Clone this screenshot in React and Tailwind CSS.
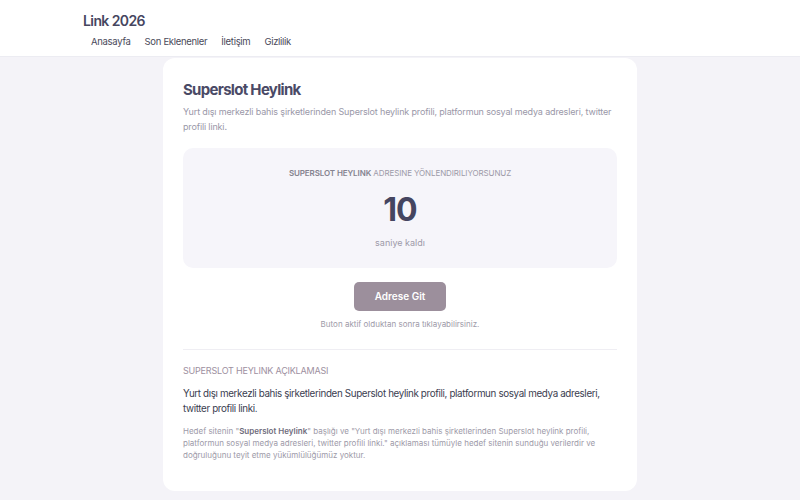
export default function App() {
  const font = { fontFamily: 'Inter, "Noto Sans", sans-serif' };
  return (
    <div className="min-h-[500px] bg-[#f4f3f8] text-[#4a4a66]" style={font}>
      <header className="bg-white border-b border-[#ececf2] h-[57px] px-[83px] pt-[12px]">
        <div className="text-[14px] font-semibold leading-[18px] text-[#46465f] tracking-[-0.6px]">Link 2026</div>
        <nav className="flex gap-[14px] pl-[8px] mt-[5px] text-[9.5px] text-[#4a4a5a] leading-[14px] tracking-[-0.3px]">
          <span>Anasayfa</span>
          <span>Son Eklenenler</span>
          <span>İletişim</span>
          <span>Gizlilik</span>
        </nav>
      </header>
      <main className="flex justify-center pt-[1px] pb-[12px]">
        <div className="w-[474px] bg-white rounded-[12px] px-[20px] pt-[22px] pb-[30px]">
          <h1 className="text-[15px] font-bold leading-[20px] text-[#4a4a66] tracking-[-0.7px]">Superslot Heylink</h1>
          <p className="mt-[4px] text-[9px] leading-[15px] text-[#9a98a8] tracking-[-0.15px]">
            Yurt dışı merkezli bahis şirketlerinden Superslot heylink profili, platformun sosyal medya adresleri, twitter profili linki.
          </p>
          <div className="mt-[14px] bg-[#f6f5fa] rounded-[10px] h-[120px] flex flex-col items-center pt-[20px]">
            <div className="text-[8px] leading-[10px] text-[#9d9aa8] uppercase tracking-[-0.1px]">
              <span className="font-semibold text-[#85838f]">SUPERSLOT HEYLINK</span> ADRESINE YÖNLENDIRILIYORSUNUZ
            </div>
            <div className="mt-[14px] text-[32px] font-bold leading-[36px] text-[#454560] tracking-[-1px]">10</div>
            <div className="mt-[9px] text-[9px] leading-[12px] text-[#9d9aa8]">saniye kaldı</div>
          </div>
          <div className="flex flex-col items-center mt-[14px]">
            <button className="w-[92px] h-[29px] rounded-[5px] bg-[#9c8f9c] text-white text-[10px] font-semibold">Adrese Git</button>
            <div className="mt-[8px] text-[8px] leading-[10px] text-[#9d9aa8]">Buton aktif olduktan sonra tıklayabilirsiniz.</div>
          </div>
          <div className="mt-[20px] border-t border-[#efeef3]"></div>
          <div className="mt-[15px] text-[9px] leading-[12px] text-[#9d90a0] tracking-[-0.2px]">SUPERSLOT HEYLINK AÇIKLAMASI</div>
          <p className="mt-[9px] text-[9.8px] leading-[15px] text-[#3a3d4f] tracking-[-0.35px]">
            Yurt dışı merkezli bahis şirketlerinden Superslot heylink profili, platformun sosyal medya adresleri, twitter profili linki.
          </p>
          <p className="mt-[9px] text-[8px] leading-[12px] text-[#9d9aa8]">
            Hedef sitenin "<span className="font-semibold text-[#6f6d7c]">Superslot Heylink</span>" başlığı ve "Yurt dışı merkezli bahis şirketlerinden Superslot heylink profili, platformun sosyal medya adresleri, twitter profili linki." açıklaması tümüyle hedef sitenin sunduğu verilerdir ve doğruluğunu teyit etme yükümlülüğümüz yoktur.
          </p>
        </div>
      </main>
    </div>
  );
}
